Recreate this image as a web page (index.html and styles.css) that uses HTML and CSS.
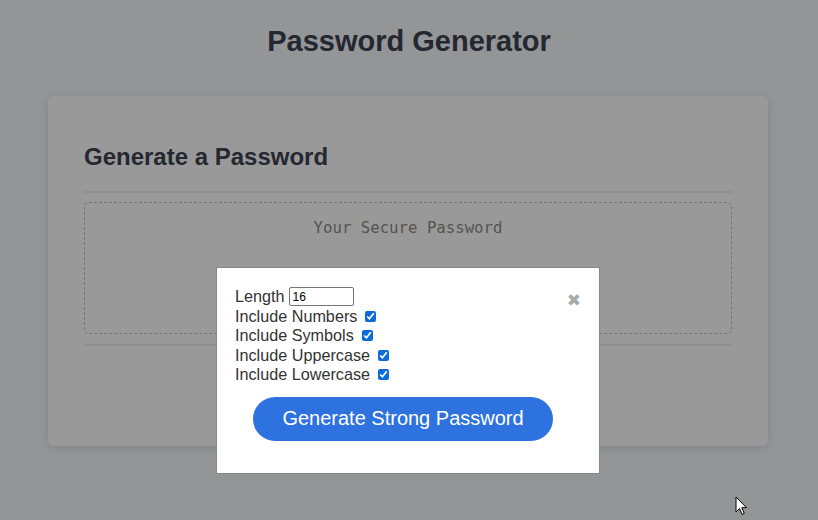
FILE: index.html
```html
<!DOCTYPE html>
<html>
<head>
<meta charset="utf-8">
<link rel="stylesheet" href="styles.css">
</head>
<body>
<h1 class="title">Password Generator</h1>
<div class="card">
  <h2 class="card-title">Generate a Password</h2>
  <hr class="rule">
  <div class="result">Your Secure Password</div>
  <hr class="rule rule-bottom">
</div>
<div class="overlay"></div>
<div class="modal">
  <span class="close">&#10006;</span>
  <div class="opts">
    <label class="opt">Length <input class="len" type="text" value="16"></label>
    <label class="opt">Include Numbers <input type="checkbox" checked></label>
    <label class="opt">Include Symbols <input type="checkbox" checked></label>
    <label class="opt">Include Uppercase <input type="checkbox" checked></label>
    <label class="opt">Include Lowercase <input type="checkbox" checked></label>
  </div>
  <button class="gen">Generate Strong Password</button>
</div>
<svg class="cursor" width="13" height="20" viewBox="0 0 13 20"><path d="M1 1 L1 16 L4.5 12.5 L7 18.5 L9.3 17.5 L6.8 11.7 L11.5 11.7 Z" fill="#fff" stroke="#000" stroke-width="1" stroke-linejoin="miter"/></svg>
</body>
</html>
```
FILE: styles.css
```css
html, body { margin: 0; padding: 0; }
body {
  background: #f7f8fc;
  font-family: "Liberation Sans", Arial, sans-serif;
  width: 818px;
  height: 520px;
  overflow: hidden;
  padding-top: 1px;
  box-sizing: border-box;
}
.title {
  margin: 24px 0 0;
  text-align: center;
  font-size: 29px;
  line-height: 33px;
  font-weight: bold;
  color: #3d4452;
}
.card {
  margin: 38px 50px 0 48px;
  background: #fff;
  border-radius: 6px;
  box-shadow: 0 2px 8px rgba(0,0,0,0.12);
  padding: 46px 36px 0;
  height: 304px;
}
.card-title {
  margin: 0;
  font-size: 24px;
  line-height: 30px;
  font-weight: bold;
  color: #3d4452;
}
.rule {
  margin: 19px 0 0;
  border: 0;
  height: 2px;
  background: #eeeeee;
}
.rule-bottom { margin-top: 10px; }
.result {
  margin-top: 9px;
  height: 132px;
  border: 1px dashed #c4c4c4;
  border-radius: 5px;
  text-align: center;
  font-family: "DejaVu Sans Mono", "Liberation Mono", monospace;
  font-size: 15.7px;
  line-height: 20px;
  padding-top: 15px;
  box-sizing: border-box;
  color: #8f8b86;
}
.overlay {
  position: fixed;
  inset: 0;
  background: rgba(0,0,0,0.4);
}
.modal {
  position: absolute;
  left: 216px;
  top: 267px;
  width: 384px;
  height: 207px;
  box-sizing: border-box;
  background: #fff;
  border: 1px solid #888;
  padding: 19px 0 0 18px;
}
.close {
  position: absolute;
  right: 18px;
  top: 22px;
  font-size: 17px;
  color: #aaa;
  font-family: "DejaVu Sans", sans-serif;
  font-weight: bold;
}
.opts {
  display: flex;
  flex-direction: column;
  color: #333;
  font-size: 16.2px;
}
.opt {
  display: flex;
  align-items: center;
  height: 19.5px;
}
.len {
  width: 65px;
  height: 19px;
  box-sizing: border-box;
  margin: 0 0 0 4px;
  border: 1px solid #767676;
  border-radius: 2px;
  font-family: "Liberation Sans", Arial, sans-serif;
  font-size: 12px;
  padding: 1px 3px;
  color: #000;
}
.opt input[type=checkbox] {
  width: 11px;
  height: 11px;
  margin: 0 0 0 8px;
  accent-color: #0b6bd8;
}
.gen {
  display: block;
  margin: 12px 0 0 18px;
  width: 300px;
  height: 44px;
  border: 0;
  border-radius: 22px;
  background: #2e72e0;
  color: #fff;
  font-family: "Liberation Sans", Arial, sans-serif;
  font-size: 20px;
  padding: 0;
}
.cursor {
  position: absolute;
  left: 735px;
  top: 496px;
}
```
